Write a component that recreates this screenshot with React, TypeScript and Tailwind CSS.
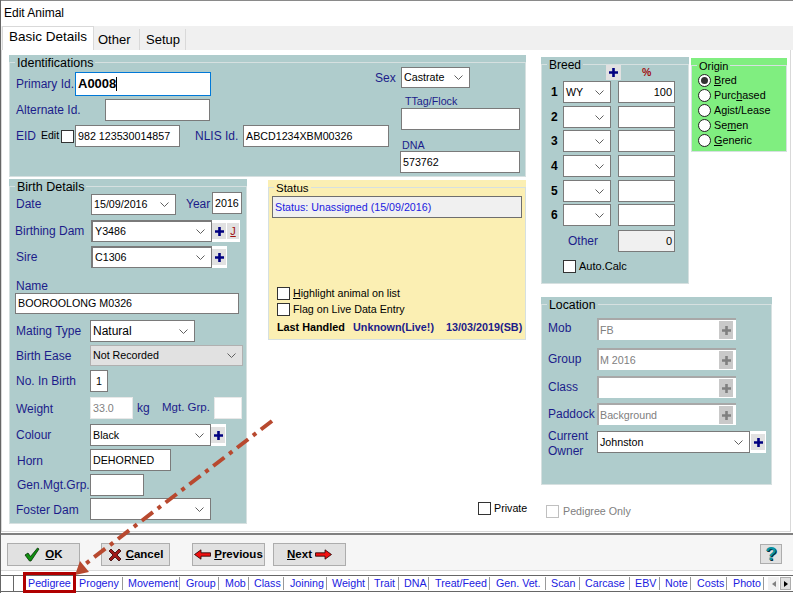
import type { ReactNode } from "react"

const navy = "text-[#1c1c8a]"
const plain = "bg-white border-[#7a7a7a] text-[10.7px]"

function Chevron() {
  return (
    <svg width="9" height="5" viewBox="0 0 9 5" className="ml-auto mr-[6px] shrink-0">
      <path d="M0.5 0.5 L4.5 4.5 L8.5 0.5" fill="none" stroke="#606060" strokeWidth="1" />
    </svg>
  )
}

function Plus({ muted = false, box = "w-[15px] h-[15px]" }: { muted?: boolean; box?: string }) {
  return (
    <div className={`${box} shrink-0 flex items-center justify-center ${muted ? "bg-[#c9c9c9]" : "bg-[#e1e1e1]"}`}>
      <svg width="9" height="9" viewBox="0 0 9 9">
        <path d="M3.2 0h2.6v3.2H9v2.6H5.8V9H3.2V5.8H0V3.2h3.2z" fill={muted ? "#808080" : "#000080"} />
      </svg>
    </div>
  )
}

function Input({ className = "", look = plain, children }: { className?: string; look?: string; children?: ReactNode }) {
  return (
    <div className={`border flex items-center px-[2px] leading-none shrink-0 ${look} ${className}`}>
      {children}
    </div>
  )
}

function Select({ className = "", look = plain, children }: { className?: string; look?: string; children?: ReactNode }) {
  return (
    <div className={`border flex items-center pl-[2px] leading-none shrink-0 ${look} ${className}`}>
      <span>{children}</span>
      <Chevron />
    </div>
  )
}

function Check({ label, className = "" }: { label?: ReactNode; className?: string }) {
  return (
    <div className={`flex items-center ${className}`}>
      <div className="w-[13px] h-[13px] border border-[#333] bg-white shrink-0" />
      {label && <span className="ml-[3px] text-[10.7px] leading-none">{label}</span>}
    </div>
  )
}

function Panel({ legend, legendSize = "text-[12.5px]", className, children }: { legend: string; legendSize?: string; className: string; children: ReactNode }) {
  return (
    <section className={`shrink-0 pt-[7px] ${className}`}>
      <div className="h-full border border-[#d6e0e0] bg-inherit">
        <span className={`block w-fit -mt-[7px] -mb-[7px] ml-[5px] px-[2px] h-[14px] bg-inherit leading-[14px] ${legendSize}`}>
          {legend}
        </span>
        {children}
      </div>
    </section>
  )
}

function Row({ label, labelClass, className = "", children }: { label: string; labelClass: string; className?: string; children: ReactNode }) {
  return (
    <div className={`flex items-center ${className}`}>
      <span className={`${navy} shrink-0 whitespace-nowrap ${labelClass}`}>{label}</span>
      {children}
    </div>
  )
}

function Radio({ on = false, children }: { on?: boolean; children: ReactNode }) {
  return (
    <div className="flex items-center h-[15px]">
      <div className="w-[13px] h-[13px] rounded-full border border-[#222] bg-white flex items-center justify-center shrink-0">
        {on && <div className="w-[7px] h-[7px] rounded-full bg-[#333]" />}
      </div>
      <span className="ml-[3px] text-[10.8px] leading-none">{children}</span>
    </div>
  )
}

function LocationField({ value }: { value?: string }) {
  return (
    <div className="flex items-center w-[139px] h-[22px] border-t-2 border-l-2 border-[#a8a8a8] bg-white pl-[1px] text-[10.7px] text-[#808080]">
      <span>{value}</span>
      <div className="ml-auto mr-[3px] flex">
        <Plus muted box="w-[14px] h-[18px]" />
      </div>
    </div>
  )
}

function Breed({ n, value, pct, className = "" }: { n: number; value?: string; pct?: string; className?: string }) {
  return (
    <div className={`flex h-[22px] items-center ${className}`}>
      <span className="w-[21px] pl-[9px] font-bold text-[12px] shrink-0">{n}</span>
      <Select className="w-[48px] h-[22px]">{value}</Select>
      <Input className="w-[57px] h-[22px] ml-[7px] justify-end" look="bg-white border-[#7a7a7a] text-[11px]">{pct}</Input>
    </div>
  )
}

function FootButton({ className, children }: { className: string; children: ReactNode }) {
  return (
    <button className={`h-[23px] bg-[#e1e1e1] border border-[#adadad] flex items-center justify-center font-bold text-[11.5px] shrink-0 ${className}`}>
      {children}
    </button>
  )
}

function RedArrow({ flip = false }: { flip?: boolean }) {
  return (
    <svg width="17" height="11" viewBox="0 0 17 11" className={flip ? "-scale-x-100" : ""}>
      <path d="M0.5 5.5 L7 0.8 L7 3.8 L16.5 3.8 L16.5 7.2 L7 7.2 L7 10.2 Z" fill="#f01010" stroke="#200000" strokeWidth="0.8" />
    </svg>
  )
}

const bottomTabs = [
  { label: "Pedigree", w: "w-[52px] pl-[4px]" },
  { label: "Progeny", w: "w-[47px] pl-[3px]" },
  { label: "Movement", w: "w-[57px] pl-[5px]" },
  { label: "Group", w: "w-[39px] pl-[6px]" },
  { label: "Mob", w: "w-[30px] pl-[6px]" },
  { label: "Class", w: "w-[35px] pl-[5px]" },
  { label: "Joining", w: "w-[43px] pl-[6px]" },
  { label: "Weight", w: "w-[42px] pl-[5px]" },
  { label: "Trait", w: "w-[30px] pl-[5px]" },
  { label: "DNA", w: "w-[30px] pl-[5px]" },
  { label: "Treat/Feed", w: "w-[61px] pl-[6px]" },
  { label: "Gen. Vet.", w: "w-[56px] pl-[6px]" },
  { label: "Scan", w: "w-[34px] pl-[5px]" },
  { label: "Carcase", w: "w-[50px] pl-[5px]" },
  { label: "EBV", w: "w-[30px] pl-[5px]" },
  { label: "Note", w: "w-[31px] pl-[5px]" },
  { label: "Costs", w: "w-[36px] pl-[6px]" },
  { label: "Photo", w: "w-[37px] pl-[6px]" },
]

export default function App() {
  return (
    <div className="relative w-[793px] h-[593px] overflow-hidden bg-white font-['Liberation_Sans',Arial,sans-serif] text-[12px] text-black border-l border-[#666] flex flex-col">
      {/* Title */}
      <div className="h-[26px] pl-[3px] pb-[2px] flex items-center border-t border-[#8a8a8a] shrink-0">Edit Animal</div>

      {/* Tabs */}
      <div className="h-[24px] bg-[#f0f0f0] flex items-end pl-[1px] shrink-0">
        <div className="w-[92px] h-[24px] bg-white border-t border-x border-[#d9d9d9] flex items-center pl-[6px] text-[13.5px] pb-[2px]">Basic Details</div>
        <div className="w-[46px] h-[21px] border-r border-[#d9d9d9] pl-[4px] flex items-center text-[13px]">Other</div>
        <div className="w-[46px] h-[21px] border-r border-[#d9d9d9] pl-[6px] flex items-center text-[13px]">Setup</div>
      </div>

      {/* Page */}
      <div className="h-[482px] w-[790px] border border-t-0 border-[#d9d9d9] flex pl-[7px] pt-[5px] shrink-0">
        {/* Left part */}
        <div className="w-[517px] shrink-0">
          <Panel legend="Identifications" className="bg-[#afcccc] w-[517px] h-[122px]">
            <div className="flex">
              <div className="w-[373px] ml-[6px] shrink-0">
                <Row label="Primary Id." labelClass="w-[59px]" className="mt-[9px]">
                  <div className="w-[136px] h-[24px] border border-[#0078d7] bg-white flex items-center pl-[2px] text-[13px] font-bold">
                    A0008<span className="w-px h-[14px] bg-black" />
                  </div>
                </Row>
                <Row label="Alternate Id." labelClass="w-[89px]" className="mt-[3px]">
                  <Input className="w-[105px] h-[22px]" />
                </Row>
                <div className="flex items-center mt-[4px]">
                  <span className={`${navy} w-[25px] shrink-0`}>EID</span>
                  <span className="w-[20px] text-[10.5px] shrink-0">Edit</span>
                  <Check />
                  <Input className="w-[105px] h-[22px] ml-[1px]">982 123530014857</Input>
                  <span className={`${navy} ml-[15px] w-[48px] shrink-0`}>NLIS Id.</span>
                  <Input className="w-[146px] h-[22px]">ABCD1234XBM00326</Input>
                </div>
              </div>
              <div className="ml-[11px] w-[120px] shrink-0">
                <Row label="Sex" labelClass="w-[26px] -ml-[25px]" className="mt-[4px]">
                  <Select className="w-[69px] h-[21px]">Castrate</Select>
                </Row>
                <div className={`mt-[6px] h-[14px] ml-[5px] text-[10.7px] leading-[14px] ${navy}`}>TTag/Flock</div>
                <Input className="w-[119px] h-[22px] ml-[1px]" />
                <div className={`mt-[9px] h-[12px] ml-[2px] text-[10.7px] leading-[12px] ${navy}`}>DNA</div>
                <Input className="w-[120px] h-[22px]">573762</Input>
              </div>
            </div>
          </Panel>

          <div className="flex mt-[2px]">
            <Panel legend="Birth Details" className="bg-[#afcccc] w-[238px] h-[345px]">
              <div className="pl-[6px] pt-[5px]">
                <Row label="Date" labelClass="w-[75px]" className="h-[24px]">
                  <Select className="w-[85px] h-[21px]">15/09/2016</Select>
                  <span className={`${navy} ml-[10px] w-[26px] shrink-0`}>Year</span>
                  <Input className="w-[30px] h-[22px] self-start">2016</Input>
                </Row>
                <Row label="Birthing Dam" labelClass="w-[76px] -ml-px" className="mt-[4px] h-[22px]">
                  <Select className="w-[121px] h-[22px] border-t-2 border-l-2">Y3486</Select>
                  <div className="flex gap-[1px] bg-white h-[22px] items-center pr-[1px]">
                    <Plus box="w-[14px] h-[16px]" />
                    <div className="w-[12px] h-[16px] bg-[#e1e1e1] text-[#a01010] text-[11px] underline flex items-center justify-center">J</div>
                  </div>
                </Row>
                <Row label="Sire" labelClass="w-[75px]" className="mt-[4px] h-[22px]">
                  <Select className="w-[121px] h-[22px] border-t-2 border-l-2">C1306</Select>
                  <div className="flex bg-white h-[22px] items-center pr-[1px]">
                    <Plus box="w-[14px] h-[16px]" />
                  </div>
                </Row>
                <div className={`mt-[11px] h-[14px] leading-[14px] ${navy}`}>Name</div>
                <Input className="w-[224px] h-[21px] -ml-px">BOOROOLONG M0326</Input>
                <Row label="Mating Type" labelClass="w-[74px]" className="mt-[6px] h-[22px]">
                  <Select className="w-[105px] h-[22px]" look="bg-white border-[#7a7a7a] text-[12px]">Natural</Select>
                </Row>
                <Row label="Birth Ease" labelClass="w-[74px]" className="mt-[3px] h-[21px]">
                  <Select className="w-[153px] h-[21px]" look="bg-[#e1e1e1] border-[#b0b0b0] text-[10.7px]">Not Recorded</Select>
                </Row>
                <Row label="No. In Birth" labelClass="w-[74px]" className="mt-[4px] h-[22px]">
                  <Input className="w-[18px] h-[22px] justify-center">1</Input>
                </Row>
                <Row label="Weight" labelClass="w-[74px] pt-[2px]" className="mt-[5px] h-[22px]">
                  <Input className="w-[43px] h-[22px]" look="bg-white border-[#e8e8e8] text-[10.7px] text-[#808080]">33.0</Input>
                  <span className={`${navy} ml-[4px] w-[25px] shrink-0`}>kg</span>
                  <span className={`${navy} w-[52px] shrink-0 text-[11.5px]`}>Mgt. Grp.</span>
                  <Input className="w-[28px] h-[22px]" look="bg-white border-[#e8e8e8]" />
                </Row>
                <Row label="Colour" labelClass="w-[74px]" className="mt-[5px] h-[22px]">
                  <Select className="w-[121px] h-[22px]">Black</Select>
                  <div className="flex bg-white h-[22px] items-center pr-[1px]">
                    <Plus box="w-[14px] h-[16px]" />
                  </div>
                </Row>
                <Row label="Horn" labelClass="w-[73px] ml-px pt-[1px]" className="mt-[3px] h-[22px]">
                  <Input className="w-[81px] h-[22px]">DEHORNED</Input>
                </Row>
                <Row label="Gen.Mgt.Grp." labelClass="w-[73px] ml-px" className="mt-[3px] h-[22px]">
                  <Input className="w-[54px] h-[22px]" />
                </Row>
                <Row label="Foster Dam" labelClass="w-[74px] pt-[1px]" className="mt-[2px] h-[22px]">
                  <Select className="w-[121px] h-[22px]" />
                </Row>
              </div>
            </Panel>

            <div className="ml-[21px] w-[258px] shrink-0">
              <Panel legend="Status" legendSize="text-[11.5px]" className="bg-[#fbefb3] w-[258px] h-[160px] mt-[1px]">
                <div className="mt-[8px] ml-[3px] w-[250px] h-[22px] border border-[#6e6e6e] bg-[#f0f0f0] flex items-center pl-[2px] text-[10.7px] text-[#2020e0]">
                  Status: Unassigned (15/09/2016)
                </div>
                <Check className="mt-[69px] ml-[8px]" label={<><u>H</u>ighlight animal on list</>} />
                <Check className="mt-[3px] ml-[8px]" label="Flag on Live Data Entry" />
                <div className="mt-[5px] ml-[8px] h-[12px] flex items-center font-bold text-[10.8px] leading-none whitespace-nowrap">
                  <span className="w-[76px]">Last Handled</span>
                  <span className="w-[93px] text-[#1c1c8a]">Unknown(Live!)</span>
                  <span className="text-[#1c1c8a]">13/03/2019(SB)</span>
                </div>
              </Panel>
              <Check className="mt-[162px] ml-[210px]" label="Private" />
            </div>
          </div>
        </div>

        {/* Right part */}
        <div className="ml-[15px] w-[246px] shrink-0">
          <div className="flex items-start">
            <Panel legend="Breed" legendSize="text-[12px]" className="bg-[#afcccc] w-[148px] h-[227px] mt-[2px]">
              <div className="flex h-[15px] items-center">
                <div className="ml-[64px]"><Plus /></div>
                <span className="ml-[21px] font-bold text-[10.5px] text-[#a01010]">%</span>
              </div>
              <Breed n={1} value="WY" pct="100" className="mt-[1px]" />
              <Breed n={2} className="mt-[3px]" />
              <Breed n={3} className="mt-[2px]" />
              <Breed n={4} className="mt-[3px]" />
              <Breed n={5} className="mt-[3px]" />
              <Breed n={6} className="mt-[2px]" />
              <div className="flex items-center mt-[4px] h-[22px]">
                <span className={`${navy} ml-[26px] w-[50px] shrink-0`}>Other</span>
                <Input className="w-[57px] h-[22px] justify-end" look="bg-[#f0f0f0] border-[#7a7a7a] text-[11px]">0</Input>
              </div>
              <Check className="mt-[8px] ml-[21px]" label={<span className="text-[11px]">Auto.Calc</span>} />
            </Panel>
            <Panel legend="Origin" legendSize="text-[11px]" className="bg-[#80ee80] w-[96px] h-[94px] ml-[2px] mt-[3px]">
              <div className="pl-[6px] mt-[7px]">
                <Radio on><u>B</u>red</Radio>
                <Radio>Purc<u>h</u>ased</Radio>
                <Radio>A<u>g</u>ist/Lease</Radio>
                <Radio>Se<u>m</u>en</Radio>
                <Radio><u>G</u>eneric</Radio>
              </div>
            </Panel>
          </div>

          <Panel legend="Location" legendSize="text-[12.3px]" className="bg-[#afcccc] w-[231px] h-[188px] mt-[13px]">
            <Row label="Mob" labelClass="w-[55px] pl-[6px] pb-[2px]" className="mt-[13px]"><LocationField value="FB" /></Row>
            <Row label="Group" labelClass="w-[55px] pl-[6px]" className="mt-[8px]"><LocationField value="M 2016" /></Row>
            <Row label="Class" labelClass="w-[55px] pl-[6px]" className="mt-[6px]"><LocationField /></Row>
            <Row label="Paddock" labelClass="w-[55px] pl-[6px]" className="mt-[5px]"><LocationField value="Background" /></Row>
            <div className="flex mt-[6px]">
              <span className={`${navy} w-[55px] pl-[6px] -mt-[2px] leading-[15px] shrink-0`}>Current<br />Owner</span>
              <Select className="w-[153px] h-[22px]">Johnston</Select>
              <div className="flex bg-white h-[22px] items-center px-[1px]">
                <Plus box="w-[14px] h-[16px]" />
              </div>
            </div>
          </Panel>

          <div className="mt-[18px] ml-[5px] flex items-center text-[10.7px] text-[#808080]">
            <div className="w-[13px] h-[13px] border border-[#c0c0c0] bg-white shrink-0" />
            <span className="ml-[4px]">Pedigree Only</span>
          </div>
        </div>
      </div>

      {/* Footer buttons */}
      <div className="mt-[1px] h-[38px] border-t-2 border-t-[#808080] border-b border-b-[#d9d9d9] bg-[#f6f6f6] flex items-start pt-[8px] pl-[6px] shrink-0">
        <FootButton className="w-[73px] gap-[5px]">
          <svg width="16" height="15" viewBox="0 0 16 15">
            <path d="M1 8 L4 6 L6.5 9.5 L13.5 1 L15 2 L7 14 L5.5 14 Z" fill="#109010" stroke="#063006" strokeWidth="0.8" />
          </svg>
          <span><u>O</u>K</span>
        </FootButton>
        <FootButton className="w-[69px] ml-[21px] gap-[4px]">
          <svg width="14" height="14" viewBox="0 0 14 14">
            <path d="M1 3 L3 1 L7 5 L11 1 L13 3 L9 7 L13 11 L11 13 L7 9 L3 13 L1 11 L5 7 Z" fill="#a01818" stroke="#300" strokeWidth="0.8" />
          </svg>
          <span><u>C</u>ancel</span>
        </FootButton>
        <FootButton className="w-[73px] ml-[22px] gap-[3px]">
          <RedArrow />
          <span><u>P</u>revious</span>
        </FootButton>
        <FootButton className="w-[73px] ml-[8px] gap-[3px]">
          <span><u>N</u>ext</span>
          <RedArrow flip />
        </FootButton>
        <div className="ml-auto mr-[11px] w-[22px] h-[20px] mt-px bg-[#e1e1e1] border border-[#adadad] flex items-center justify-center text-[19px] font-bold text-[#0a93a3] [text-shadow:1px_1px_0_#003040]">?</div>
      </div>

      {/* Bottom link tabs */}
      <div className="mt-[4px] h-[17px] border-y border-[#666] flex items-center shrink-0 text-[10.7px] text-[#2020e0]">
        <div className="w-[13px] h-full border-r border-[#666] bg-white" />
        <div className="w-[10px]" />
        {bottomTabs.map((t) => (
          <div key={t.label} className={`${t.w} h-[13px] flex items-center border-r border-[#999] whitespace-nowrap shrink-0`}>
            {t.label}
          </div>
        ))}
        <div className="ml-[4px] flex gap-px">
          <div className="w-[11px] h-[13px] bg-[#f0f0f0] flex items-center justify-center">
            <div className="w-0 h-0 border-y-[3px] border-y-transparent border-r-[4px] border-r-[#808080]" />
          </div>
          <div className="w-[11px] h-[13px] bg-[#e1e1e1] border border-[#adadad] flex items-center justify-center">
            <div className="w-0 h-0 border-y-[3px] border-y-transparent border-l-[4px] border-l-black" />
          </div>
        </div>
      </div>

      {/* Annotation over the form */}
      <svg className="absolute left-[-1px] top-0 pointer-events-none" width="793" height="593" viewBox="0 0 793 593">
        <line x1="272" y1="421" x2="84" y2="565" stroke="#b8492f" strokeWidth="4" strokeDasharray="14 6 4 6" />
        <path d="M75 575 L80 561 L89 572 Z" fill="#b8492f" />
      </svg>
      <div className="absolute left-[22px] top-[572px] w-[53px] h-[21px] border-[3px] border-[#b00000]" />
    </div>
  )
}
